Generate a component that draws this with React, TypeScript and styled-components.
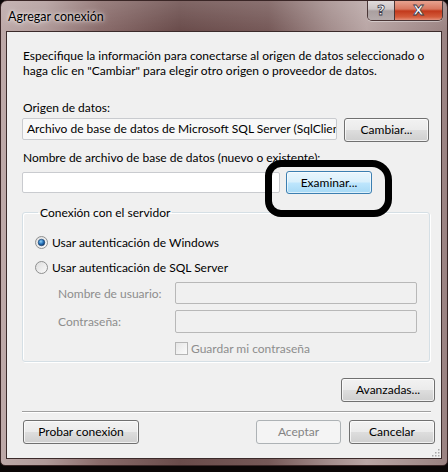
import React from 'react';
import styled, { createGlobalStyle, css } from 'styled-components';

const Global = createGlobalStyle`
  html, body { margin: 0; padding: 0; background: #0b0707; }
  body { font-family: Lato, "Noto Sans", sans-serif; font-size: 12px; color: #000; }
  * { box-sizing: border-box; }
`;

const Window = styled.div`
  position: relative;
  width: 448px;
  height: 466px;
  display: flex;
  flex-direction: column;
  border-radius: 7px 7px 5px 5px;
  border: 1px solid #3a2626;
  background:
    linear-gradient(180deg, rgba(255,255,255,0.15) 0px, rgba(255,255,255,0) 30px),
    linear-gradient(90deg, #bda9a8 0%, #b09a99 10%, #8a6c6b 22%, #6a4c4b 40%, #765958 60%, #a48e8d 74%, #b9a6a5 82%, #9a8281 100%);
  overflow: hidden;
`;

const TitleBar = styled.div`
  height: 30px;
  display: flex;
  align-items: flex-start;
  justify-content: space-between;
  padding: 0 4px 0 7px;
`;

const Title = styled.div`
  margin-top: 8px;
  font-size: 12.5px;
  color: #000;
  text-shadow: 0 0 6px rgba(255,255,255,0.9), 0 0 3px rgba(255,255,255,0.8);
`;

const CaptionButtons = styled.div`
  display: flex;
  margin-top: -1px;
  border: 1px solid #4a3636;
  border-top: none;
  border-radius: 0 0 5px 5px;
  overflow: hidden;
  box-shadow: 0 1px 0 rgba(255,255,255,0.4);
`;

const CaptionButton = styled.div<{ $close?: boolean }>`
  height: 20px;
  width: ${p => (p.$close ? '47px' : '27px')};
  display: flex;
  align-items: center;
  justify-content: center;
  font-family: "DejaVu Sans", sans-serif;
  font-weight: bold;
  font-size: 14px;
  color: #fff;
  -webkit-text-stroke: 0.8px #3a3a4a;
  ${p =>
    p.$close
      ? css`
          background: linear-gradient(180deg, #e9a896 0%, #d8775f 45%, #c2391c 55%, #d45c3c 85%, #e4907a 100%);
        `
      : css`
          border-right: 1px solid #4a3636;
          background: linear-gradient(180deg, #e4dede 0%, #cdc5c5 45%, #aaa0a0 55%, #b5abab 100%);
        `}
`;

const Client = styled.div`
  flex: 1;
  margin: 0 5px 6px 5px;
  border: 1px solid #3b2a2a;
  background: #f0f0f0;
  padding: 16px 12px 0 15px;
  display: flex;
  flex-direction: column;
  position: relative;
`;

const Intro = styled.p`
  margin: 0 0 0 1px;
  line-height: 15px;
  white-space: nowrap;
`;

const Label = styled.div<{ $gap: number }>`
  margin-top: ${p => p.$gap}px;
  line-height: 15px;
  margin-left: 1px;
  white-space: nowrap;
`;

const Row = styled.div<{ $gap: number }>`
  margin-top: ${p => p.$gap}px;
  display: flex;
  align-items: flex-start;
`;

const TextBox = styled.div<{ $w: number; $h: number; $tone?: 'white' | 'ro' | 'off' }>`
  width: ${p => p.$w}px;
  height: ${p => p.$h}px;
  border: 1px solid ${p => (p.$tone === 'off' ? '#b8b8b8' : '#c9cbcf')};
  border-radius: 2px;
  background: ${p => (p.$tone === 'white' ? '#fff' : p.$tone === 'ro' ? '#f8f8f8' : '#f0f0f0')};
  padding: 2px 0 0 4px;
  white-space: nowrap;
  overflow: hidden;
  line-height: 16px;
`;

const Button = styled.div<{ $w: number; $h?: number; $kind?: 'normal' | 'hot' | 'off'; $mt?: number; $ml?: number }>`
  width: ${p => p.$w}px;
  height: ${p => p.$h ?? 24}px;
  margin-top: ${p => p.$mt ?? 0}px;
  margin-left: ${p => p.$ml ?? 0}px;
  display: flex;
  align-items: center;
  justify-content: center;
  border-radius: 3px;
  padding-bottom: 1px;
  white-space: nowrap;
  ${p =>
    p.$kind === 'hot'
      ? css`
          border: 1px solid #3c7fb1;
          background: linear-gradient(180deg, #eaf6fd 0%, #d9f0fc 48%, #bee6fd 52%, #a7d9f5 100%);
          box-shadow: inset 0 0 0 1px rgba(255,255,255,0.6);
        `
      : p.$kind === 'off'
      ? css`
          border: 1px solid #adb2b5;
          background: #f4f4f4;
          color: #838383;
        `
      : css`
          border: 1px solid #707070;
          background: linear-gradient(180deg, #f2f2f2 0%, #ebebeb 48%, #dddddd 52%, #cfcfcf 100%);
          box-shadow: inset 0 0 0 1px rgba(255,255,255,0.7);
        `}
`;

const Group = styled.fieldset`
  margin: 11px 0 0 0;
  padding: 0 0 0 12px;
  width: 408px;
  height: 157px;
  border: 1px solid #d5dfe5;
  border-radius: 3px;
  box-shadow: inset 1px 1px 0 #fff, 1px 1px 0 #fff;
  display: flex;
  flex-direction: column;
`;

const Legend = styled.legend`
  margin-left: 3px;
  padding: 0 2px;
  line-height: 15px;
`;

const RadioRow = styled.div<{ $gap: number }>`
  margin-top: ${p => p.$gap}px;
  display: flex;
  align-items: center;
  gap: 4px;
  line-height: 15px;
`;

const FieldRow = styled.div<{ $gap: number }>`
  margin-top: ${p => p.$gap}px;
  display: flex;
  align-items: center;
`;

const FieldLabel = styled.div`
  width: 140px;
  padding-left: 23px;
  color: #8d8d8d;
  line-height: 15px;
  white-space: nowrap;
`;

const CheckRow = styled.div`
  margin-top: 8px;
  margin-left: 140px;
  display: flex;
  align-items: center;
  gap: 3px;
  color: #8d8d8d;
`;

const CheckBox = styled.div`
  width: 13px;
  height: 13px;
  border: 1px solid #b5b5b5;
  background: linear-gradient(135deg, #e6e6e6, #fbfbfb);
`;

const RightRow = styled.div<{ $gap: number }>`
  margin-top: ${p => p.$gap}px;
  display: flex;
  justify-content: flex-end;
  width: 413px;
`;

const Separator = styled.div`
  margin-top: 9px;
  width: 409px;
  height: 1px;
  background: #a0a0a0;
  box-shadow: 0 1px 0 #fff;
`;

const BottomRow = styled.div`
  margin-top: 8px;
  display: flex;
  width: 413px;
`;

const Spacer = styled.div`
  flex: 1;
`;

const Marker = styled.div`
  position: absolute;
  left: 258px;
  top: 128px;
  width: 127px;
  height: 57px;
  border: 7px solid #000;
  border-radius: 16px 20px 18px 16px;
  pointer-events: none;
`;

const Grip = styled.svg`
  position: absolute;
  right: 1px;
  bottom: 1px;
`;

const Radio = ({ on }: { on?: boolean }) => (
  <svg width="13" height="13" viewBox="0 0 13 13">
    <defs>
      <linearGradient id={on ? 'rgOn' : 'rgOff'} x1="0" y1="0" x2="1" y2="1">
        <stop offset="0" stopColor="#dcdcdc" />
        <stop offset="1" stopColor="#fbfbfb" />
      </linearGradient>
      <radialGradient id="dot" cx="0.4" cy="0.35" r="0.7">
        <stop offset="0" stopColor="#8fd0f5" />
        <stop offset="0.5" stopColor="#2a78c0" />
        <stop offset="1" stopColor="#0b2e5c" />
      </radialGradient>
    </defs>
    <circle cx="6.5" cy="6.5" r="6" fill={`url(#${on ? 'rgOn' : 'rgOff'})`} stroke="#8e8f8f" strokeWidth="1" />
    {on && <circle cx="6.5" cy="6.5" r="3.3" fill="url(#dot)" stroke="#1b3f6b" strokeWidth="0.6" />}
  </svg>
);

export default function App() {
  return (
    <>
      <Global />
      <Window>
        <TitleBar>
          <Title>Agregar conexión</Title>
          <CaptionButtons>
            <CaptionButton>?</CaptionButton>
            <CaptionButton $close>X</CaptionButton>
          </CaptionButtons>
        </TitleBar>
        <Client>
          <Intro>
            Especifique la información para conectarse al origen de datos seleccionado o
            <br />
            haga clic en "Cambiar" para elegir otro origen o proveedor de datos.
          </Intro>
          <Label $gap={22}>Origen de datos:</Label>
          <Row $gap={3}>
            <TextBox $w={315} $h={22} $tone="ro">
              Archivo de base de datos de Microsoft SQL Server (SqlClient)
            </TextBox>
            <Button $w={85} $ml={7}>Cambiar...</Button>
          </Row>
          <Label $gap={8}>Nombre de archivo de base de datos (nuevo o existente):</Label>
          <Row $gap={6}>
            <TextBox $w={258} $h={21} $tone="white" style={{ marginTop: 1 }} />
            <Button $w={86} $h={23} $ml={6} $kind="hot">Examinar...</Button>
          </Row>
          <Group>
            <Legend>Conexión con el servidor</Legend>
            <RadioRow $gap={15}>
              <Radio on />
              <span>Usar autenticación de Windows</span>
            </RadioRow>
            <RadioRow $gap={10}>
              <Radio />
              <span>Usar autenticación de SQL Server</span>
            </RadioRow>
            <FieldRow $gap={7}>
              <FieldLabel>Nombre de usuario:</FieldLabel>
              <TextBox $w={242} $h={22} $tone="off" />
            </FieldRow>
            <FieldRow $gap={6}>
              <FieldLabel>Contraseña:</FieldLabel>
              <TextBox $w={242} $h={23} $tone="off" />
            </FieldRow>
            <CheckRow>
              <CheckBox />
              <span>Guardar mi contraseña</span>
            </CheckRow>
          </Group>
          <RightRow $gap={16}>
            <Button $w={94}>Avanzadas...</Button>
          </RightRow>
          <Separator />
          <BottomRow>
            <Button $w={116} $ml={1}>Probar conexión</Button>
            <Spacer />
            <Button $w={85} $kind="off">Aceptar</Button>
            <Button $w={86} $ml={8}>Cancelar</Button>
          </BottomRow>
          <Marker />
          <Grip width="10" height="10" viewBox="0 0 10 10">
            {[[8, 2], [8, 5], [5, 5], [8, 8], [5, 8], [2, 8]].map(([x, y], i) => (
              <rect key={i} x={x} y={y} width="1.5" height="1.5" fill="#a8a8a8" />
            ))}
          </Grip>
        </Client>
      </Window>
    </>
  );
}
